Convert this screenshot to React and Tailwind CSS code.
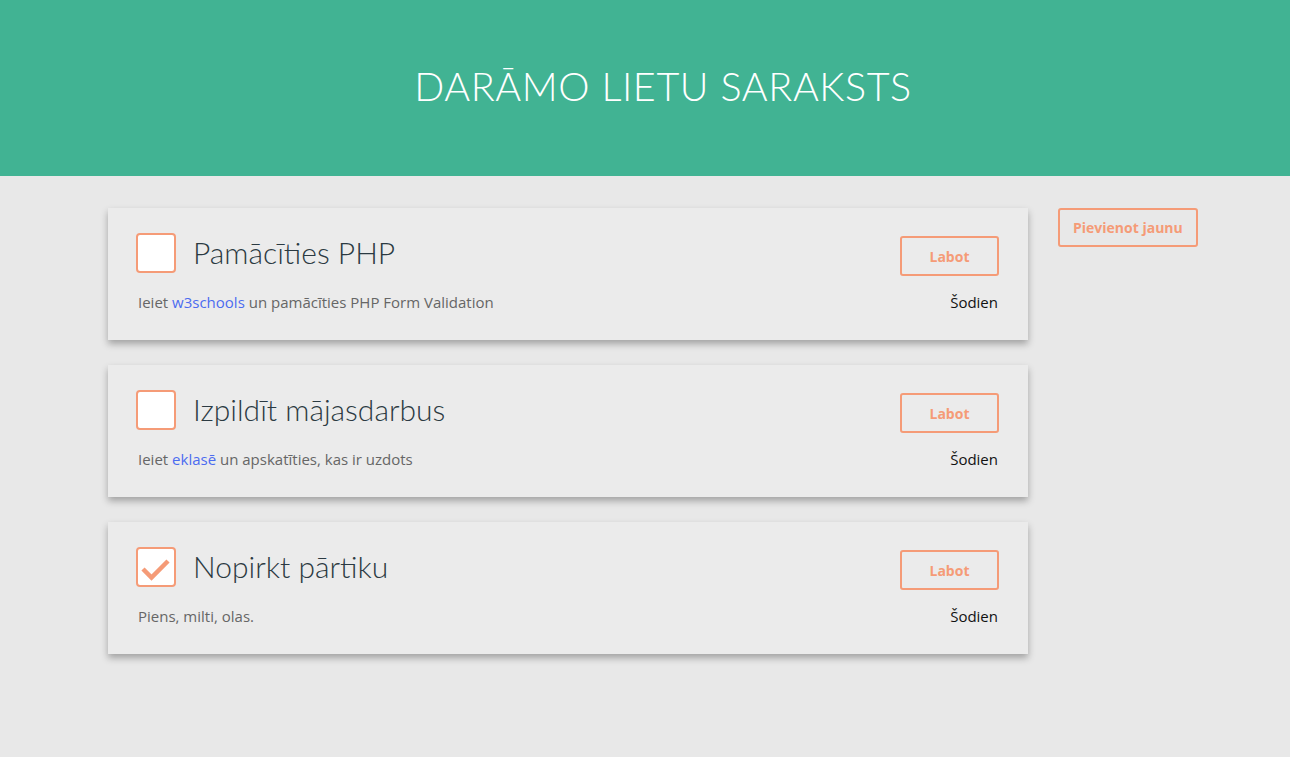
import React from 'react';

const TASKS = [
  {
    title: 'Pamācīties PHP',
    desc: <>Ieiet <a href="#" className="text-[#4b6cf0]">w3schools</a> un pamācīties PHP Form Validation</>,
    done: false,
  },
  {
    title: 'Izpildīt mājasdarbus',
    desc: <>Ieiet <a href="#" className="text-[#4b6cf0]">eklasē</a> un apskatīties, kas ir uzdots</>,
    done: false,
  },
  {
    title: 'Nopirkt pārtiku',
    desc: 'Piens, milti, olas.',
    done: true,
  },
];

const heading = { fontFamily: 'Lato, "Noto Sans", sans-serif' };

export default function App() {
  return (
    <div className="min-h-[757px] bg-[#e8e8e8]" style={{ fontFamily: '"Open Sans", "Noto Sans", sans-serif' }}>
      <header className="h-[176px] bg-[#41b393] flex items-center justify-center pl-[36px]">
        <h1 className="text-white text-[39.5px] font-light tracking-[0.6px] -mt-[4px]" style={heading}>
          DARĀMO LIETU SARAKSTS
        </h1>
      </header>

      <div className="flex items-start gap-[30px] pl-[108px] pt-[32px]">
        <div className="w-[920px] flex flex-col gap-[25px]">
          {TASKS.map((t) => (
            <TaskCard key={t.title} task={t} />
          ))}
        </div>
        <button className="h-[39px] px-[13px] border-2 border-[#f59b77] rounded-[3px] text-[#f59b77] text-[14px] font-bold">
          Pievienot jaunu
        </button>
      </div>
    </div>
  );
}

function TaskCard({ task }) {
  return (
    <div className="bg-[#ebebeb] h-[132px] px-[28px] pt-[22px] shadow-[0_4px_7px_rgba(0,0,0,0.3)]">
      <div className="flex items-center justify-between">
        <div className="flex items-center gap-[17px]">
          <div className="w-[40px] h-[40px] bg-white border-2 border-[#f59b77] rounded-[4px] flex items-center justify-center">
            {task.done && (
              <svg width="40" height="40" viewBox="0 0 40 40" className="-m-[2px]">
                <path d="M7 22 L15.5 30.5 L32 14" fill="none" stroke="#f59b77" strokeWidth="4.5" />
              </svg>
            )}
          </div>
          <span className="text-[30px] font-light text-[#2b3a42] -mt-[2px]" style={heading}>{task.title}</span>
        </div>
        <button className="w-[99px] h-[40px] border-2 border-[#f59b77] rounded-[3px] text-[#f59b77] text-[14px] font-bold mr-[1px] mt-[6px]">
          Labot
        </button>
      </div>
      <div className="flex items-center justify-between mt-[15px] text-[15px]">
        <span className="text-[#666] pl-[2px]">{task.desc}</span>
        <span className="text-[#111] pr-[2px]">Šodien</span>
      </div>
    </div>
  );
}
